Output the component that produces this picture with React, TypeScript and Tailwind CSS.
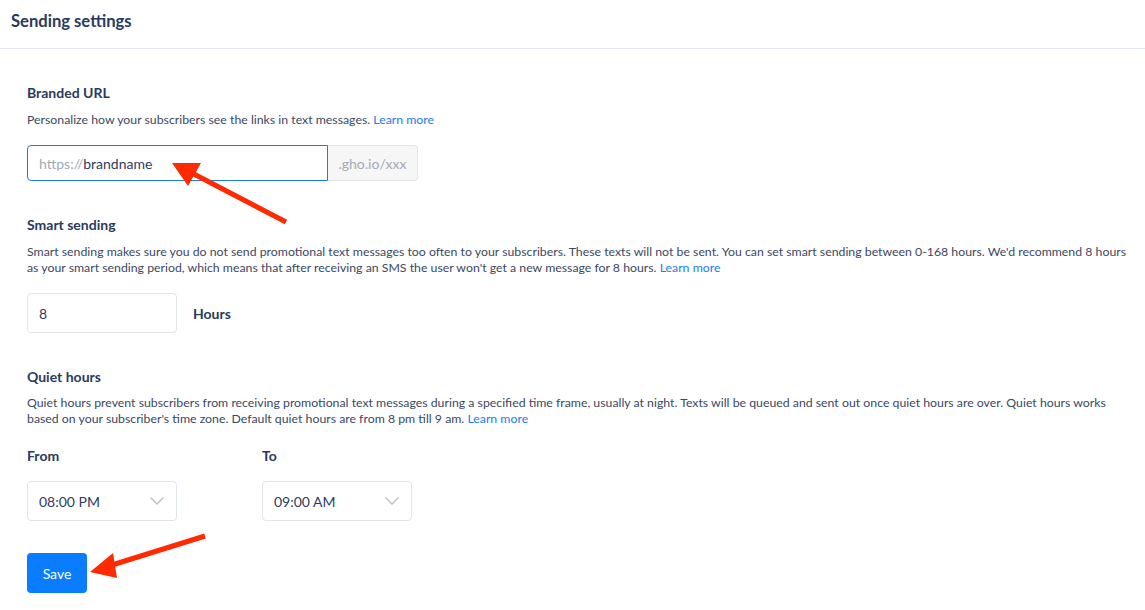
import React, { useState } from 'react';

const LearnMore = () => (
  <a href="#" className="text-[#1a7cf0]">Learn more</a>
);

const Chevron = () => (
  <svg width="16" height="10" viewBox="0 0 16 10" fill="none">
    <path d="M1.5 1.5 L8 8 L14.5 1.5" stroke="#b7bdc8" strokeWidth="1.3" />
  </svg>
);

const TimeSelect = ({ value }: { value: string }) => (
  <div className="flex items-center justify-between w-[150px] h-[40px] px-[11px] border border-[#e1e5ec] rounded-[4px] bg-white">
    <span className="text-[14px] text-[#2e3d5c]">{value}</span>
    <Chevron />
  </div>
);

const App: React.FC = () => {
  const [brand, setBrand] = useState('brandname');
  const [hours, setHours] = useState('8');

  return (
    <div className="relative w-[1145px] h-[610px] bg-white text-[#2e3d5c]" style={{ fontFamily: 'Lato, "Noto Sans", sans-serif' }}>
      <div className="h-[49px] flex items-center px-[11px] border-b border-[#e3e8f0]">
        <h1 className="text-[16.6px] font-bold text-[#283a5e] -mt-[6px]">Sending settings</h1>
      </div>

      <div className="px-[27px] pt-[34px]">
        {/* Branded URL */}
        <h2 className="text-[14px] font-bold text-[#283a5e] leading-[20px]">Branded URL</h2>
        <p className="mt-[9px] text-[12.3px] leading-[16px] text-[#3b4863]">
          Personalize how your subscribers see the links in text messages. <LearnMore />
        </p>
        <div className="mt-[17px] flex h-[36px]">
          <div className="w-[301px] flex items-center px-[11px] border border-[#1a7cf5] rounded-l-[4px] text-[14px]">
            <span className="text-[#a3aab5]">https://</span>
            <input
              value={brand}
              onChange={(e) => setBrand(e.target.value)}
              className="flex-1 min-w-0 outline-none bg-transparent text-[#2e3d5c]"
            />
          </div>
          <div className="w-[90px] flex items-center justify-center border border-l-0 border-[#e2e4e8] bg-[#f6f6f7] rounded-r-[4px] text-[14px] text-[#a3aab5]">
            .gho.io/xxx
          </div>
        </div>

        {/* Smart sending */}
        <h2 className="mt-[34px] text-[14px] font-bold text-[#283a5e] leading-[20px]">Smart sending</h2>
        <p className="mt-[9px] text-[12.3px] leading-[16px] text-[#3b4863]">
          <span className="block whitespace-nowrap">Smart sending makes sure you do not send promotional text messages too often to your subscribers. These texts will not be sent. You can set smart sending between 0-168 hours. We'd recommend 8 hours</span>
          <span className="block whitespace-nowrap">as your smart sending period, which means that after receiving an SMS the user won't get a new message for 8 hours. <LearnMore /></span>
        </p>
        <div className="mt-[17px] flex items-center gap-[16px]">
          <input
            value={hours}
            onChange={(e) => setHours(e.target.value)}
            className="w-[150px] h-[40px] px-[11px] border border-[#e1e5ec] rounded-[4px] text-[14px] outline-none"
          />
          <span className="text-[14px] font-bold text-[#283a5e]">Hours</span>
        </div>

        {/* Quiet hours */}
        <h2 className="mt-[34px] text-[14px] font-bold text-[#283a5e] leading-[20px]">Quiet hours</h2>
        <p className="mt-[8px] text-[12.3px] leading-[16px] text-[#3b4863]">
          <span className="block whitespace-nowrap">Quiet hours prevent subscribers from receiving promotional text messages during a specified time frame, usually at night. Texts will be queued and sent out once quiet hours are over. Quiet hours works</span>
          <span className="block whitespace-nowrap">based on your subscriber's time zone. Default quiet hours are from 8 pm till 9 am. <LearnMore /></span>
        </p>
        <div className="mt-[19px] flex gap-[85px]">
          <div>
            <div className="text-[14px] font-bold text-[#283a5e] leading-[20px]">From</div>
            <div className="mt-[15px]"><TimeSelect value="08:00 PM" /></div>
          </div>
          <div>
            <div className="text-[14px] font-bold text-[#283a5e] leading-[20px]">To</div>
            <div className="mt-[15px]"><TimeSelect value="09:00 AM" /></div>
          </div>
        </div>

        <button className="mt-[32px] w-[60px] h-[40px] rounded-[4px] bg-[#0a7cff] text-white text-[14px]">
          Save
        </button>
      </div>

      {/* annotation arrows */}
      <svg className="absolute inset-0 pointer-events-none" width="1145" height="610">
        <line x1="286" y1="222" x2="190" y2="172" stroke="#ff2a00" strokeWidth="5" />
        <polygon points="172,163 201,163 188,186" fill="#ff2a00" />
        <line x1="205" y1="536" x2="112" y2="565" stroke="#ff2a00" strokeWidth="5" />
        <polygon points="90,572 113,553 117,578" fill="#ff2a00" />
      </svg>
    </div>
  );
};

export default App;
